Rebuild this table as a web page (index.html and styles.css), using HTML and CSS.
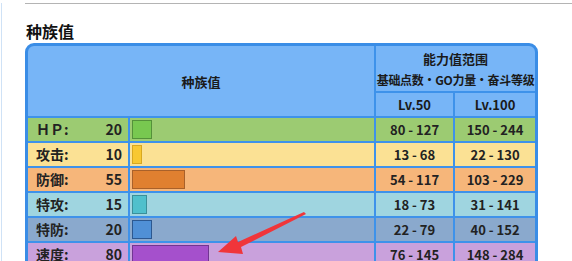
FILE: index.html
```html
<!DOCTYPE html>
<html lang="zh-CN">
<head>
<meta charset="utf-8">
<title>种族值</title>
<link rel="stylesheet" href="styles.css">
</head>
<body>
<div class="page">
  <div class="rule"></div>
  <h2 class="title">种族值</h2>
  <div class="statbox">
    <table class="stats">
      <colgroup>
        <col class="c-label"><col class="c-bar"><col class="c-l50"><col class="c-l100">
      </colgroup>
      <thead>
        <tr class="h1">
          <th colspan="2" rowspan="2">种族值</th>
          <th colspan="2"><div class="hmain">能力值范围</div><div class="hsub">基础点数・GO力量・奋斗等级</div></th>
        </tr>
        <tr class="h2">
          <th>Lv.50</th>
          <th>Lv.100</th>
        </tr>
      </thead>
      <tbody>
        <tr class="r-hp">
          <td class="lab"><span>ＨＰ:</span><span>20</span></td>
          <td class="barcell"><div class="bar" style="width:20px"></div></td>
          <td>80 - 127</td><td>150 - 244</td>
        </tr>
        <tr class="r-atk">
          <td class="lab"><span>攻击:</span><span>10</span></td>
          <td class="barcell"><div class="bar" style="width:10px"></div></td>
          <td>13 - 68</td><td>22 - 130</td>
        </tr>
        <tr class="r-def">
          <td class="lab"><span>防御:</span><span>55</span></td>
          <td class="barcell"><div class="bar" style="width:53px"></div></td>
          <td>54 - 117</td><td>103 - 229</td>
        </tr>
        <tr class="r-spa">
          <td class="lab"><span>特攻:</span><span>15</span></td>
          <td class="barcell"><div class="bar" style="width:15px"></div></td>
          <td>18 - 73</td><td>31 - 141</td>
        </tr>
        <tr class="r-spd">
          <td class="lab"><span>特防:</span><span>20</span></td>
          <td class="barcell"><div class="bar" style="width:20px"></div></td>
          <td>22 - 79</td><td>40 - 152</td>
        </tr>
        <tr class="r-spe">
          <td class="lab"><span>速度:</span><span>80</span></td>
          <td class="barcell"><div class="bar" style="width:77px"></div></td>
          <td>76 - 145</td><td>148 - 284</td>
        </tr>
      </tbody>
    </table>
  </div>
</div>
<svg class="arrow" width="572" height="261" viewBox="0 0 572 261" aria-hidden="true">
  <polygon points="218,252 236,236 238,242 304,212 306,214 241,247 243,254" fill="#f0353a"/>
</svg>
</body>
</html>
```
FILE: styles.css
```css
html, body {
  margin: 0;
  padding: 0;
  background: #fff;
}
body {
  font-family: "Noto Sans CJK SC", "Noto Sans", sans-serif;
  color: #222;
  width: 572px;
  height: 261px;
  overflow: hidden;
  position: relative;
}
.page {
  margin-left: 1px;
  border-left: 1px solid #cfe2f6;
  padding-left: 23px;
  height: 261px;
  box-sizing: border-box;
}
.rule {
  height: 1px;
  background: #b4b4b4;
  margin-top: 3px;
}
.title {
  margin: 17px 0 0 1px;
  font-size: 16px;
  line-height: 20px;
  font-weight: bold;
  color: #111;
}
.statbox {
  margin-top: 2px;
  width: 513px;
  box-sizing: border-box;
  border: 3px solid #3a8de6;
  border-radius: 9px;
  overflow: hidden;
  background: #77b5f7;
}
.stats {
  width: 100%;
  table-layout: fixed;
  border-collapse: collapse;
  border-style: hidden;
  font-size: 13px;
  font-weight: bold;
}
.c-label { width: 101px; }
.c-bar { width: 246px; }
.c-l50 { width: 79px; }
.c-l100 { width: 81px; }
.stats th, .stats td {
  border: 2px solid #3e92ea;
  padding: 0;
  text-align: center;
  vertical-align: middle;
}
.stats th {
  font-weight: bold;
  color: #1a1a1a;
}
.h1 th { height: 45px; }
.h2 th { height: 23px; }
.hmain { font-size: 13px; line-height: 21px; }
.hsub { font-size: 12px; line-height: 21px; white-space: nowrap; letter-spacing: -0.3px; }
.stats td { height: 23px; line-height: 23px; }
.lab { padding: 0 6px 0 8px !important; }
.lab {
  text-align: left !important;
  font-size: 14px;
}
.lab span:last-child { float: right; }
.barcell { padding: 0 0 0 2px !important; text-align: left !important; }
.bar {
  height: 19px;
  box-sizing: border-box;
  border: 1px solid;
  vertical-align: middle;
}
.r-hp td { background: #9ccb72; }
.r-hp .bar { background: #78c850; border-color: #54913a; }
.r-atk td { background: #fbe194; }
.r-atk .bar { background: #f8c832; border-color: #d8a820; }
.r-def td { background: #f6b67a; }
.r-def .bar { background: #e08030; border-color: #a9612a; }
.r-spa td { background: #9fd5e0; }
.r-spa .bar { background: #4fc0cc; border-color: #3a909a; }
.r-spd td { background: #8aa9cd; }
.r-spd .bar { background: #5090d6; border-color: #2c5890; }
.r-spe td { background: #c9a1dc; }
.r-spe .bar { background: #a550cc; border-color: #713592; }
.arrow {
  position: absolute;
  left: 0;
  top: 0;
  pointer-events: none;
}
```
